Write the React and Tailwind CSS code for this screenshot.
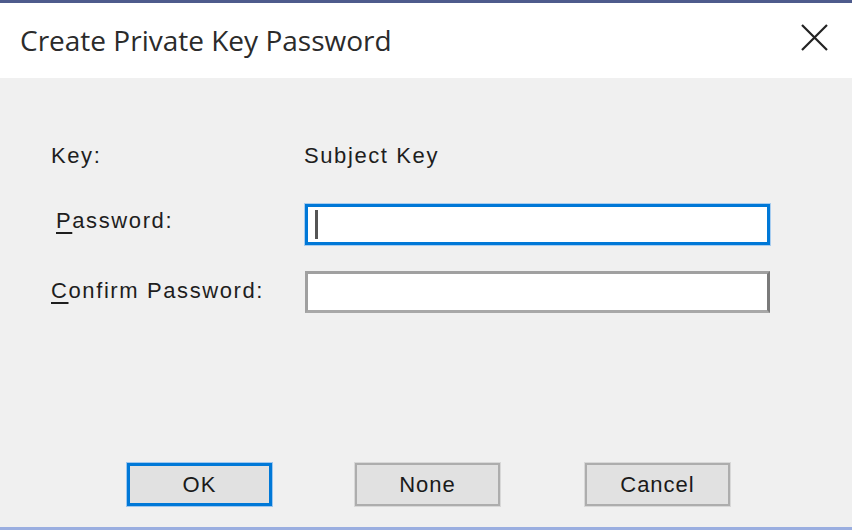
import React from 'react';

const labelFont = { fontFamily: '"Liberation Sans", Arial, sans-serif' };

const Button = ({ children, primary }) => (
  <button
    type="button"
    className={
      primary
        ? 'w-[145px] h-[43px] bg-[#e1e1e1] border-[3px] border-[#0078d7] outline outline-1 outline-[#9ec7ef] text-[22px] tracking-[1px] text-[#1a1a1a]'
        : 'w-[145px] h-[43px] bg-[#e1e1e1] border-2 border-[#adadad] outline outline-1 outline-[#d8d8d8] text-[22px] tracking-[1px] text-[#1a1a1a]'
    }
    style={labelFont}
  >
    {children}
  </button>
);

const App = () => {
  return (
    <div className="w-[852px] h-[530px] flex flex-col bg-[#f0f0f0] overflow-hidden">
      <div className="h-[3px] bg-[#4e5b8c]" />

      {/* title bar */}
      <div className="h-[75px] bg-white flex items-center justify-between pl-[20px] pr-[24px]">
        <span
          className="text-[28px] text-[#2b2b2b] pb-[2px]"
          style={{ fontFamily: '"Open Sans", "Noto Sans", sans-serif' }}
        >
          Create Private Key Password
        </span>
        <svg width="27" height="27" viewBox="0 0 27 27" className="mb-[6px]">
          <path d="M1 1 L26 26 M26 1 L1 26" stroke="#222" strokeWidth="2.2" />
        </svg>
      </div>

      {/* body */}
      <div className="flex-1 flex flex-col pl-[51px] text-[22px] tracking-[1.6px] text-[#1e1e1e]" style={labelFont}>
        <div className="mt-[62px] h-[30px] flex items-center">
          <span className="w-[253px]">Key:</span>
          <span>Subject Key</span>
        </div>

        <div className="mt-[34px] h-[41px] flex items-center">
          <label className="w-[254px] pl-[5px] -mt-[8px]">
            <span className="underline underline-offset-[4px] decoration-2">P</span>assword:
          </label>
          <div className="w-[465px] h-[41px] bg-white border-[3px] border-[#0078d7] outline outline-1 outline-[#a8cdf0] flex items-center pl-[7px]">
            <div className="w-[3px] h-[29px] bg-[#555]" />
          </div>
        </div>

        <div className="mt-[26px] h-[42px] flex items-center">
          <label className="w-[254px] -mt-[4px]">
            <span className="underline underline-offset-[4px] decoration-2">C</span>onfirm Password:
          </label>
          <div className="w-[465px] h-[42px] bg-white border-[3px] border-[#a0a0a0] border-r-[#7a7a7a] border-b-[#a8a8a8]" />
        </div>

        <div className="mt-auto mb-[21px] flex pl-[76px]">
          <Button primary>OK</Button>
          <div className="ml-[83px]">
            <Button>None</Button>
          </div>
          <div className="ml-[85px]">
            <Button>Cancel</Button>
          </div>
        </div>
      </div>

      <div className="h-[3px] bg-[#9aaee0]" />
    </div>
  );
};

export default App;
